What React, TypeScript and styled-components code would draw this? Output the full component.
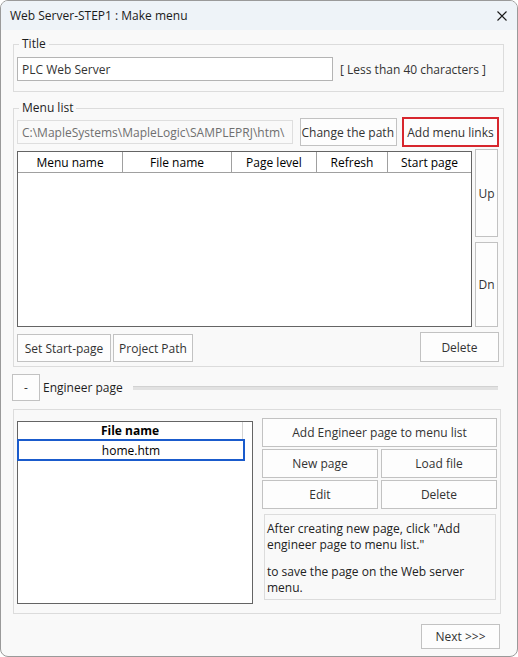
import * as React from "react"
import styled, { createGlobalStyle } from "styled-components"

const Global = createGlobalStyle`
  html, body {
    margin: 0;
    padding: 0;
    background: #ffffff;
  }
  * {
    box-sizing: border-box;
  }
`

const Window = styled.div`
  width: 518px;
  height: 657px;
  border: 1px solid #9a9a9a;
  border-radius: 8px;
  overflow: hidden;
  background: #f9f9f9;
  display: flex;
  flex-direction: column;
  font-family: "Open Sans", "Noto Sans", sans-serif;
  font-size: 12px;
  color: #1e1e1e;
`

const TitleBar = styled.div`
  height: 29px;
  flex: none;
  display: flex;
  align-items: center;
  justify-content: space-between;
  padding: 0 10px 0 9px;
  background: #eef3f8;
  color: #1a1a1a;
`

const Body = styled.div`
  flex: 1;
  display: flex;
  flex-direction: column;
  padding: 0 13px 0 12px;
`

const Group = styled.fieldset<{ $top: number; $pt: number; $pb: number; $mr?: number }>`
  margin: ${(p) => p.$top}px ${(p) => p.$mr || 0}px 0 0;
  padding: ${(p) => p.$pt}px 3px ${(p) => p.$pb}px 3px;
  border: 1px solid #dcdcdc;
  min-width: 0;
`

const Legend = styled.legend`
  margin-left: 2px;
  padding: 0 3px;
  line-height: 16px;
  color: #1e1e1e;
`

const Row = styled.div<{ $gap: number }>`
  display: flex;
  align-items: center;
  gap: ${(p) => p.$gap}px;
`

const TextBox = styled.div<{ $w: number; $muted?: boolean }>`
  width: ${(p) => p.$w}px;
  height: 24px;
  flex: none;
  display: flex;
  align-items: center;
  padding-left: 4px;
  background: ${(p) => (p.$muted ? "#f9f9f9" : "#ffffff")};
  border: 1px solid ${(p) => (p.$muted ? "#dedede" : "#b4b4b4")};
  color: ${(p) => (p.$muted ? "#6f6f6f" : "#333333")};
  white-space: nowrap;
  overflow: hidden;
`

const Hint = styled.span`
  color: #333333;
  white-space: nowrap;
`

const Button = styled.button<{ $w: number; $h: number; $alert?: boolean; $end?: boolean }>`
  width: ${(p) => p.$w}px;
  height: ${(p) => p.$h}px;
  flex: none;
  margin: 0;
  padding: 0 2px;
  display: flex;
  align-items: center;
  justify-content: ${(p) => (p.$end ? "flex-end" : "center")};
  background: #fdfdfd;
  border: ${(p) => (p.$alert ? "2px solid #d7262d" : "1px solid #c2c2c2")};
  font-family: inherit;
  font-size: 12px;
  color: #333333;
  white-space: nowrap;
  overflow: hidden;
`

const TableArea = styled.div`
  display: flex;
  gap: 3px;
  margin-top: 2px;
`

const Table = styled.div`
  width: 455px;
  height: 176px;
  margin-top: 2px;
  border: 1px solid #646464;
  background: #ffffff;
`

const HeaderRow = styled.div`
  display: flex;
  height: 21px;
  border-bottom: 1px solid #a0a0a0;
`

const HeaderCell = styled.div<{ $w: number; $bold?: boolean; $line?: string }>`
  width: ${(p) => p.$w}px;
  flex: none;
  display: flex;
  align-items: center;
  justify-content: center;
  border-right: 1px solid ${(p) => p.$line || "#a0a0a0"};
  font-weight: ${(p) => (p.$bold ? 700 : 400)};
  color: #000000;

  &:last-child {
    border-right: ${(p) => (p.$bold ? `1px solid ${p.$line}` : "none")};
  }
`

const SideColumn = styled.div`
  display: flex;
  flex-direction: column;
  gap: 5px;
`

const BottomRow = styled.div`
  display: flex;
  align-items: flex-end;
  justify-content: space-between;
  margin-top: 5px;
`

const Pair = styled.div`
  display: flex;
  gap: 2px;
`

const EngineerBar = styled.div`
  display: flex;
  align-items: center;
  margin: 7px 6px 0 -1px;
`

const EngineerLabel = styled.span`
  margin: 0 10px 0 3px;
  white-space: nowrap;
`

const Rule = styled.div`
  flex: 1;
  height: 4px;
  background: #e2e2e2;
  border-top: 1px solid #d2d2d2;
`

const EngineerBody = styled.div`
  display: flex;
  align-items: flex-start;
  gap: 9px;
`

const FileList = styled.div`
  width: 237px;
  height: 183px;
  margin-top: 3px;
  border: 1px solid #646464;
  background: #ffffff;
`

const FileHeader = styled.div`
  display: flex;
  height: 17px;
`

const SelectedRow = styled.div`
  width: 228px;
  height: 22px;
  margin-left: -1px;
  display: flex;
  align-items: center;
  justify-content: center;
  border: 2px solid #1a5bcc;
  color: #000000;
`

const ActionColumn = styled.div`
  width: 235px;
  display: flex;
  flex-direction: column;
  gap: 2px;
`

const Note = styled.div`
  height: 86px;
  margin: 3px 1px 0 2px;
  padding: 6px 2px 0 2px;
  border: 1px solid #dcdcdc;
  color: #222222;
`

const NotePara = styled.p<{ $mt: number }>`
  margin: ${(p) => p.$mt}px 0 0 0;
  line-height: 16px;
`

const Footer = styled.div`
  display: flex;
  justify-content: flex-end;
  margin: 10px 4px 0 0;
`

function CloseIcon() {
  return (
    <svg width="10" height="10" viewBox="0 0 10 10">
      <path d="M0.5 0.5 L9.5 9.5 M9.5 0.5 L0.5 9.5" stroke="#1a1a1a" strokeWidth="1.1" />
    </svg>
  )
}

const columns = [
  { name: "Menu name", w: 105 },
  { name: "File name", w: 109 },
  { name: "Page level", w: 85 },
  { name: "Refresh", w: 71 },
  { name: "Start page", w: 83 },
]

export default function App() {
  return (
    <>
      <Global />
      <Window>
        <TitleBar>
          <span>Web Server-STEP1 : Make menu</span>
          <CloseIcon />
        </TitleBar>
        <Body>
          <Group $top={6} $pt={5} $pb={10}>
            <Legend>Title</Legend>
            <Row $gap={7}>
              <TextBox $w={316}>PLC Web Server</TextBox>
              <Hint>[ Less than 40 characters ]</Hint>
            </Row>
          </Group>

          <Group $top={8} $pt={1} $pb={4}>
            <Legend>Menu list</Legend>
            <Row $gap={5}>
              <TextBox $w={276} $muted>
                C:\MapleSystems\MapleLogic\SAMPLEPRJ\htm\
              </TextBox>
              <Button $w={97} $h={28} $end style={{ marginLeft: 2 }}>
                Change the path
              </Button>
              <Button $w={97} $h={30} $alert>
                Add menu links
              </Button>
            </Row>
            <TableArea>
              <Table>
                <HeaderRow>
                  {columns.map((c) => (
                    <HeaderCell key={c.name} $w={c.w}>
                      {c.name}
                    </HeaderCell>
                  ))}
                </HeaderRow>
              </Table>
              <SideColumn>
                <Button $w={23} $h={88}>Up</Button>
                <Button $w={23} $h={85}>Dn</Button>
              </SideColumn>
            </TableArea>
            <BottomRow>
              <Pair>
                <Button $w={94} $h={28}>Set Start-page</Button>
                <Button $w={80} $h={28}>Project Path</Button>
              </Pair>
              <Button $w={79} $h={30} style={{ marginRight: 1 }}>
                Delete
              </Button>
            </BottomRow>
          </Group>

          <EngineerBar>
            <Button $w={28} $h={27}>-</Button>
            <EngineerLabel>Engineer page</EngineerLabel>
            <Rule />
          </EngineerBar>

          <Group $top={8} $pt={8} $pb={9} $mr={3}>
            <EngineerBody>
              <FileList>
                <FileHeader>
                  <HeaderCell $w={225} $bold $line="#d4d4d4">
                    File name
                  </HeaderCell>
                </FileHeader>
                <SelectedRow>home.htm</SelectedRow>
              </FileList>
              <ActionColumn>
                <Button $w={235} $h={29}>Add Engineer page to menu list</Button>
                <Row $gap={3}>
                  <Button $w={116} $h={29}>New page</Button>
                  <Button $w={116} $h={29}>Load file</Button>
                </Row>
                <Row $gap={3}>
                  <Button $w={116} $h={29}>Edit</Button>
                  <Button $w={116} $h={29}>Delete</Button>
                </Row>
                <Note>
                  <NotePara $mt={0}>
                    After creating new page, click "Add
                    <br />
                    engineer page to menu list."
                  </NotePara>
                  <NotePara $mt={11}>
                    to save the page on the Web server
                    <br />
                    menu.
                  </NotePara>
                </Note>
              </ActionColumn>
            </EngineerBody>
          </Group>

          <Footer>
            <Button $w={79} $h={25}>Next &gt;&gt;&gt;</Button>
          </Footer>
        </Body>
      </Window>
    </>
  )
}
